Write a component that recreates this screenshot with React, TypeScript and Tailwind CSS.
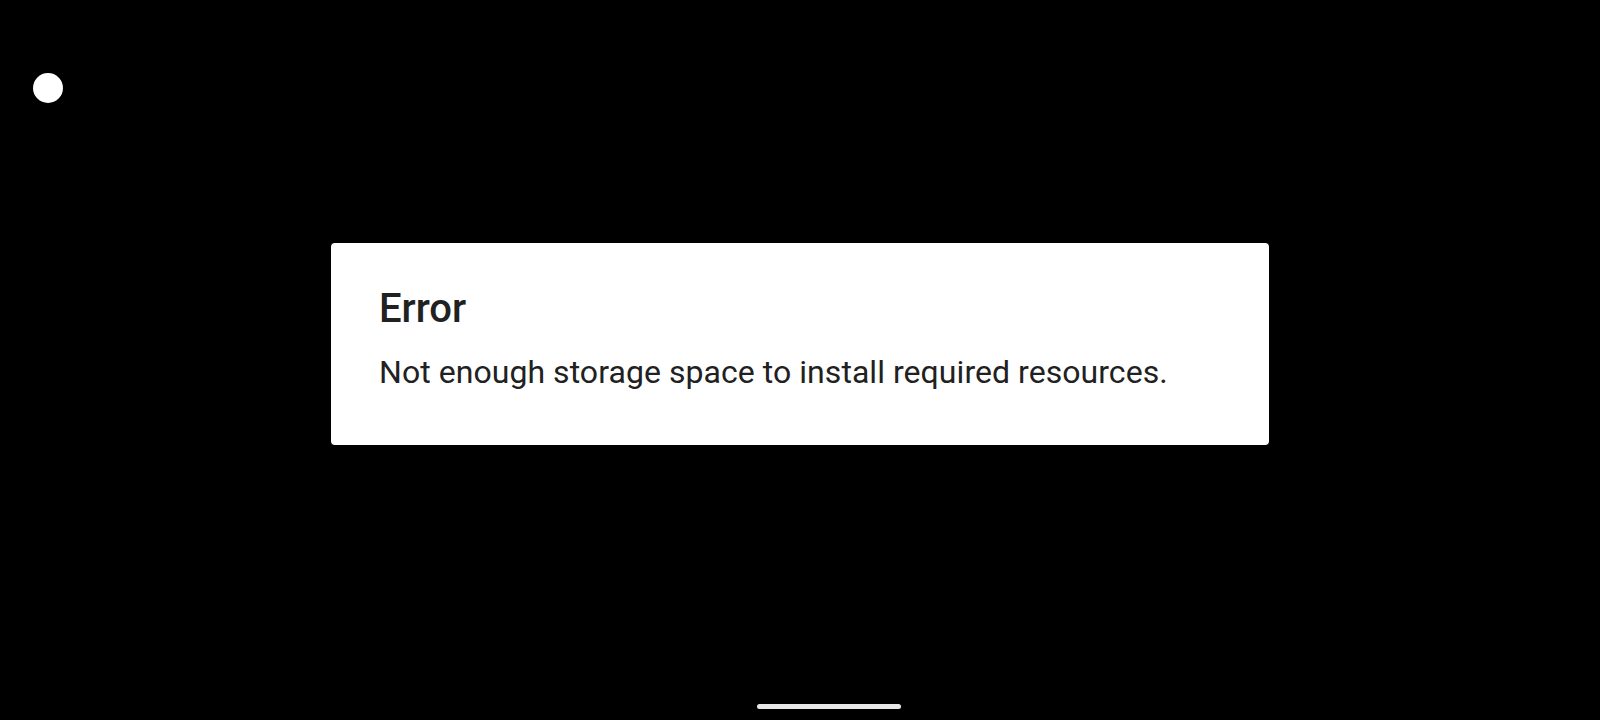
export default function App() {
  return (
    <div className="relative w-[1600px] h-[720px] bg-black overflow-hidden font-['Roboto',sans-serif]">
      {/* status dot */}
      <div className="absolute left-[33px] top-[73px] w-[30px] h-[30px] rounded-full bg-white" />

      <div className="pt-[243px] flex justify-center">
        <div className="w-[938px] h-[202px] bg-white rounded-[4px] pl-[48px] pr-[46px] pt-[43px]">
          <h1 className="text-[40px] leading-[46px] font-medium text-[#212121]">Error</h1>
          <p className="mt-[21px] text-[32px] leading-[38px] tracking-[0.05px] text-[#212121]">
            Not enough storage space to install required resources.
          </p>
        </div>
      </div>

      {/* gesture bar */}
      <div className="absolute left-[757px] top-[704px] w-[144px] h-[5px] rounded-full bg-[#e8e8e8]" />
    </div>
  );
}
